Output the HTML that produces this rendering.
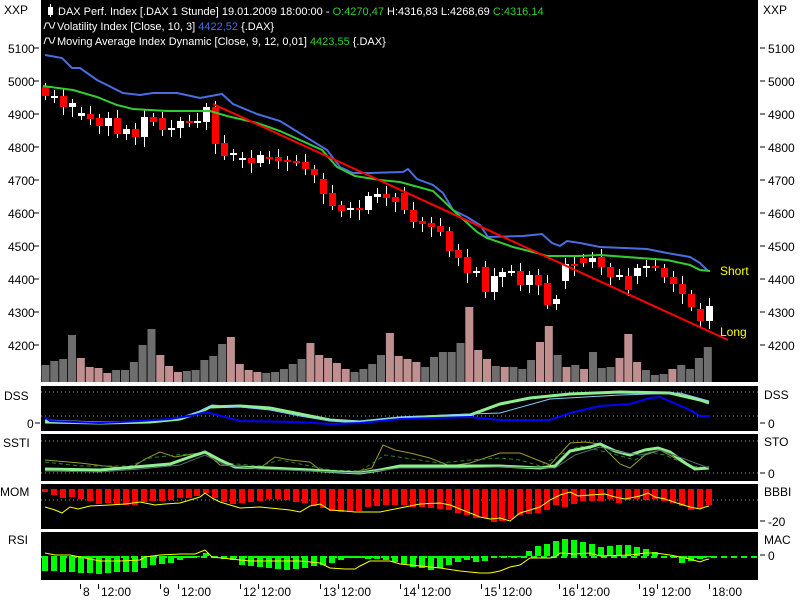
<!DOCTYPE html>
<html><head><meta charset="utf-8"><style>
body{margin:0;background:#fff;width:800px;height:600px;overflow:hidden;font-family:"Liberation Sans",sans-serif}
svg{position:absolute;left:0;top:0}
text{font-family:"Liberation Sans",sans-serif;font-size:12px}
.hd{font-size:11px}
</style></head><body>
<svg id="s" width="800" height="600" xmlns="http://www.w3.org/2000/svg">
<rect x="0" y="0" width="800" height="600" fill="#fff"/>
<rect x="41" y="0" width="717" height="382" fill="#000"/>
<rect x="41" y="386" width="717" height="45" fill="#000"/>
<rect x="41" y="434" width="717" height="47" fill="#000"/>
<rect x="41" y="484" width="717" height="45" fill="#000"/>
<rect x="41" y="532" width="717" height="48" fill="#000"/>
<g id="g"></g>
<!-- header -->
<rect x="48" y="7" width="5" height="8" fill="#fff"/><line x1="50.5" y1="4" x2="50.5" y2="17" stroke="#fff"/>
<text class="hd" x="58" y="15" fill="#fff">DAX Perf. Index [.DAX  1 Stunde] 19.01.2009 18:00:00 - <tspan fill="#2fd02f">O:4270,47</tspan> H:4316,83 L:4268,69 <tspan fill="#2fd02f">C:4316,14</tspan></text>
<path d="M44 29 L46 23 L49 23 L51 28 L53 28 L55 22" stroke="#fff" fill="none"/>
<text class="hd" x="57" y="30" fill="#fff">Volatility Index [Close, 10, 3] <tspan fill="#4a6ee0">4422,52</tspan> {.DAX}</text>
<path d="M44 44 L46 38 L49 38 L51 43 L53 43 L55 37" stroke="#fff" fill="none"/>
<text class="hd" x="57" y="45" fill="#fff">Moving Average Index Dynamic [Close, 9, 12, 0,01] <tspan fill="#2fd02f">4423,55</tspan> {.DAX}</text>
<text x="720" y="275" fill="#ffff00">Short</text>
<text x="720" y="336" fill="#ffff00">Long</text>
<!-- axes -->
<g fill="#000">
<text x="4" y="14">XXP</text><text x="763" y="14">XXP</text>
<text x="8" y="53">5100</text><text x="8" y="86">5000</text><text x="8" y="119">4900</text><text x="8" y="152">4800</text><text x="8" y="185">4700</text><text x="8" y="218">4600</text><text x="8" y="251">4500</text><text x="8" y="284">4400</text><text x="8" y="317">4300</text><text x="8" y="350">4200</text>
<text x="768" y="53">5100</text><text x="768" y="86">5000</text><text x="768" y="119">4900</text><text x="768" y="152">4800</text><text x="768" y="185">4700</text><text x="768" y="218">4600</text><text x="768" y="251">4500</text><text x="768" y="284">4400</text><text x="768" y="317">4300</text><text x="768" y="350">4200</text>
<text x="4" y="400">DSS</text><text x="27" y="428">0</text>
<text x="3" y="447">SSTI</text>
<text x="0" y="496">MOM</text>
<text x="8" y="544">RSI</text>
<text x="764" y="399">DSS</text><text x="768" y="428">0</text>
<text x="764" y="446">STO</text><text x="768" y="478">0</text>
<text x="764" y="496">BBBI</text><text x="768" y="526">-20</text>
<text x="764" y="544">MAC</text><text x="768" y="560">0</text>
<text x="83" y="596">8</text><text x="101" y="596">12:00</text>
<text x="163" y="596">9</text><text x="181" y="596">12:00</text>
<text x="243" y="596">12</text><text x="261" y="596">12:00</text>
<text x="323" y="596">13</text><text x="341" y="596">12:00</text>
<text x="403" y="596">14</text><text x="421" y="596">12:00</text>
<text x="484" y="596">15</text><text x="502" y="596">12:00</text>
<text x="562" y="596">16</text><text x="580" y="596">12:00</text>
<text x="642" y="596">19</text><text x="661" y="596">12:00</text>
<text x="712" y="596">18:00</text>
</g>
</svg>
<script>
var g=document.getElementById('g'),h='';
function R(x,y,w,hh,c){h+='<rect x="'+x+'" y="'+y+'" width="'+w+'" height="'+hh+'" fill="'+c+'"/>';}
function L(x1,y1,x2,y2,c,w,d){h+='<line x1="'+x1+'" y1="'+y1+'" x2="'+x2+'" y2="'+y2+'" stroke="'+c+'" stroke-width="'+(w||1)+'"'+(d?' stroke-dasharray="'+d+'"':'')+'/>';}
function P(pts,c,w,d){h+='<polyline points="'+pts+'" fill="none" stroke="'+c+'" stroke-width="'+(w||1)+'"'+(d?' stroke-dasharray="'+d+'"':'')+'/>';}
[48,81,114,147,180,213,246,279,312,345].forEach(function(y){L(34,y,39,y,'#000');L(760,y,765,y,'#000');});
[[35,423],[760,423],[760,473],[760,521],[760,555]].forEach(function(a){L(a[0],a[1],a[0]+5,a[1],'#000');});
[80,98,160,178,240,258,320,338,400,418,481,499,559,577,639,657,709].forEach(function(x){L(x+.5,584,x+.5,589,'#000');});
var vt=[365,361,359,335,358,367,368,373,370,370,362,345,329,355,366,372,371,370,360,356,344,337,364,370,372,373,372,369,364,359,343,355,358,363,369,372,369,364,355,333,356,359,362,367,357,352,352,343,307,350,359,366,367,367,369,360,342,326,355,367,365,369,352,368,367,358,334,362,370,375,374,369,365,369,358,347];
var vc='GGGGPPPPGGGGGPPPGGGGGPPPPGGGGGPPPPPGGGGPPPPGGGGGPPPGPGGGPPGPGPGGGPPPGGGPGG';
for(var i=0;i<vt.length;i++){R((41.5+i*8.83).toFixed(1),vt[i],8,382-vt[i],vc[i]=='P'?'#c09090':'#6e6e6e');}
var cd=[[87,96,'R'],[96,97,'W'],[96,107,'R'],[103,107,'W'],[113,116,'W'],[114,119,'R'],[118,126,'R'],[118,126,'W'],[118,134,'R'],[129,134,'W'],[129,137,'R'],[117,137,'W'],[117,122,'R'],[118,130,'R'],[128,129,'W'],[121,128,'W'],[121,123,'R'],[121,122,'W'],[107,122,'W'],[107,144,'R'],[143,156,'R'],[153,155,'W'],[158,160,'W'],[158,163,'R'],[155,163,'W'],[157,158,'R'],[157,161,'R'],[160,161,'R'],[161,162,'R'],[162,169,'R'],[169,175,'R'],[179,194,'R'],[193,206,'R'],[205,211,'R'],[208,210,'W'],[208,210,'R'],[196,210,'W'],[194,197,'W'],[194,198,'R'],[197,202,'R'],[193,210,'R'],[210,222,'R'],[221,224,'R'],[223,227,'R'],[226,232,'R'],[231,251,'R'],[250,258,'R'],[257,273,'R'],[271,273,'W'],[267,292,'R'],[276,292,'W'],[272,277,'W'],[271,272,'W'],[271,285,'R'],[275,285,'W'],[275,285,'R'],[283,305,'R'],[299,304,'W'],[264,281,'W'],[264,266,'R'],[258,263,'R'],[258,262,'W'],[257,267,'R'],[267,277,'R'],[275,276,'W'],[276,290,'R'],[268,276,'W'],[266,267,'W'],[266,267,'R'],[268,277,'R'],[277,284,'R'],[284,294,'R'],[294,307,'R'],[309,321,'R'],[306,321,'W']];
for(var i=0;i<cd.length;i++){var c=cd[i],x=Math.round(45+i*8.97),col=c[2]=='R'?'#ff0000':'#fff';
 var wt=c[0]-4-(i%3)*2,wb=c[1]+4+(i%4)*2;L(x+.5,wt,x+.5,wb,'#fff');var hh=Math.max(2,c[1]-c[0]);R(x-3,c[0],7,hh,col);}
P('45,55 62,58 72,68 80,68 97,80 107,85 123,93 140,95 153,93 177,93 200,98 222,94 233,104 257,114 280,121 327,150 340,167 353,173 370,173 403,172 408,169 417,179 433,185 443,193 453,210 467,217 480,225 488,237 523,236 542,234 552,243 560,246 567,241 580,243 600,247 647,249 667,253 690,257 700,263 708,271','#4a6ee0',2);
P('43,86 73,90 97,97 117,105 133,109 167,111 210,111 227,116 257,123 280,131 322,150 337,167 355,176 380,180 400,182 433,191 453,210 477,232 487,238 513,247 537,253 547,256 580,256 600,255 667,260 690,265 700,270 710,271','#33cc33',2);
L(213,104,728,340,'#ff0000',2);
L(41,392,758,392,'#999',1,'1 3');L(41,416,758,416,'#999',1,'1 3');
P('45,422 100,423 150,422 180,419 200,412 210,407 240,406 270,408 300,414 330,420 360,422 400,418 470,415 500,404 530,398 570,394 620,392 670,393 700,400 709,403','#90ee90',3);
P('45,420 100,422 150,421 180,418 200,411 212,405 240,407 270,410 300,416 330,421 360,421 400,417 470,414 500,413 550,399 620,395 680,393 709,401','#87cefa',1);
P('45,417 50,421 100,423 140,421 170,419 195,415 205,412 210,413 240,421 300,422 330,424 360,423 400,419 470,417 500,420 550,420 570,413 600,406 630,404 650,398 660,397 690,410 700,416 710,416','#0000ff',2);
L(41,441,758,441,'#999',1,'1 3');L(41,473,758,473,'#999',1,'1 3');
P('45,460 80,463 130,469 145,459 160,452 175,457 205,452 220,465 260,468 275,457 290,460 310,462 320,470 355,472 372,468 383,445 395,450 410,453 430,458 450,466 470,463 500,453 520,453 550,465 570,443 585,442 600,444 620,464 630,468 645,455 660,450 675,458 690,467 709,469','#9a9a30',1);
P('45,462 80,466 130,466 150,458 175,455 205,453 225,463 260,466 280,460 300,464 330,470 360,471 385,455 405,458 440,463 470,460 500,458 520,460 540,466 560,455 580,446 610,453 635,460 650,452 665,455 690,466 709,468','#228b22',1,'4 3');
P('45,469 100,470 135,467 170,464 190,457 205,452 220,460 235,467 270,468 310,470 340,472 360,473 380,470 400,466 440,466 470,466 500,466 540,468 555,466 570,451 590,447 600,444 615,451 630,455 645,450 658,448 670,452 685,463 695,469 709,468','#90ee90',3);
P('45,471 100,472 140,469 180,465 205,455 225,465 260,469 310,471 360,473 400,468 460,468 500,467 555,468 575,455 600,447 620,452 640,455 660,450 690,461 709,468','#4f6f6f',1);
L(41,500,758,500,'#999',1,'1 3');
var mb=[492,495,498,497,499,501,504,503,505,505,505,502,501,501,500,498,498,496,493,498,502,504,503,502,501,499,499,500,502,503,506,508,511,512,512,511,507,506,505,505,505,507,507,508,509,510,513,515,518,518,522,521,519,515,514,513,510,505,507,504,501,501,501,499,503,500,499,500,499,501,503,506,510,508,505];
for(var i=0;i<mb.length;i++){R(Math.round(42+i*8.97),489,6,mb[i]-489,'#ff0000');}
P('45,507 55,510 62,513 70,507 78,509 90,506 110,505 125,504 140,502 155,505 165,504 180,503 190,500 200,497 205,493 212,498 220,502 240,508 260,507 290,510 300,512 310,506 320,504 330,510 345,511 355,512 380,512 400,508 410,506 420,504 440,503 450,505 460,509 470,513 480,517 490,519 500,518 510,521 520,513 530,510 540,507 550,500 560,495 570,492 578,496 590,495 605,494 615,497 625,499 640,496 648,493 655,497 665,499 680,504 690,507 700,509 705,507 709,506','#ffff00',1);
L(41,557,758,557,'#00ff00',2,'6 4');
var rb=[571,571,572,572,573,573,574,573,572,572,572,568,565,564,563,560,558,557,553,557,559,560,565,566,567,568,569,570,569,568,566,565,563,560,558,558,559,559,560,562,564,567,568,570,568,565,562,560,562,561,557,557,557,557,551,546,544,541,539,540,542,544,547,546,545,545,547,549,552,557,557,563,561,559,557];
for(var i=0;i<rb.length;i++){var y=rb[i];if(y>=556)R(Math.round(42+i*8.97),556,6,y-556,'#00ff00');else R(Math.round(42+i*8.97),y,6,556-y,'#00ff00');}
P('45,553 55,555 70,555 90,559 100,561 120,561 140,560 145,557 160,555 180,554 195,554 205,550 212,557 250,561 300,561 320,563 330,568 345,569 355,569 360,566 370,561 390,561 400,564 420,566 440,568 460,571 480,573 490,573 500,571 510,567 520,565 530,558 550,558 555,557 560,553 575,554 590,553 600,556 630,555 645,553 655,553 670,555 690,559 700,562 705,560 709,559','#ffff00',1);
g.innerHTML=h;
</script>
</body></html>
